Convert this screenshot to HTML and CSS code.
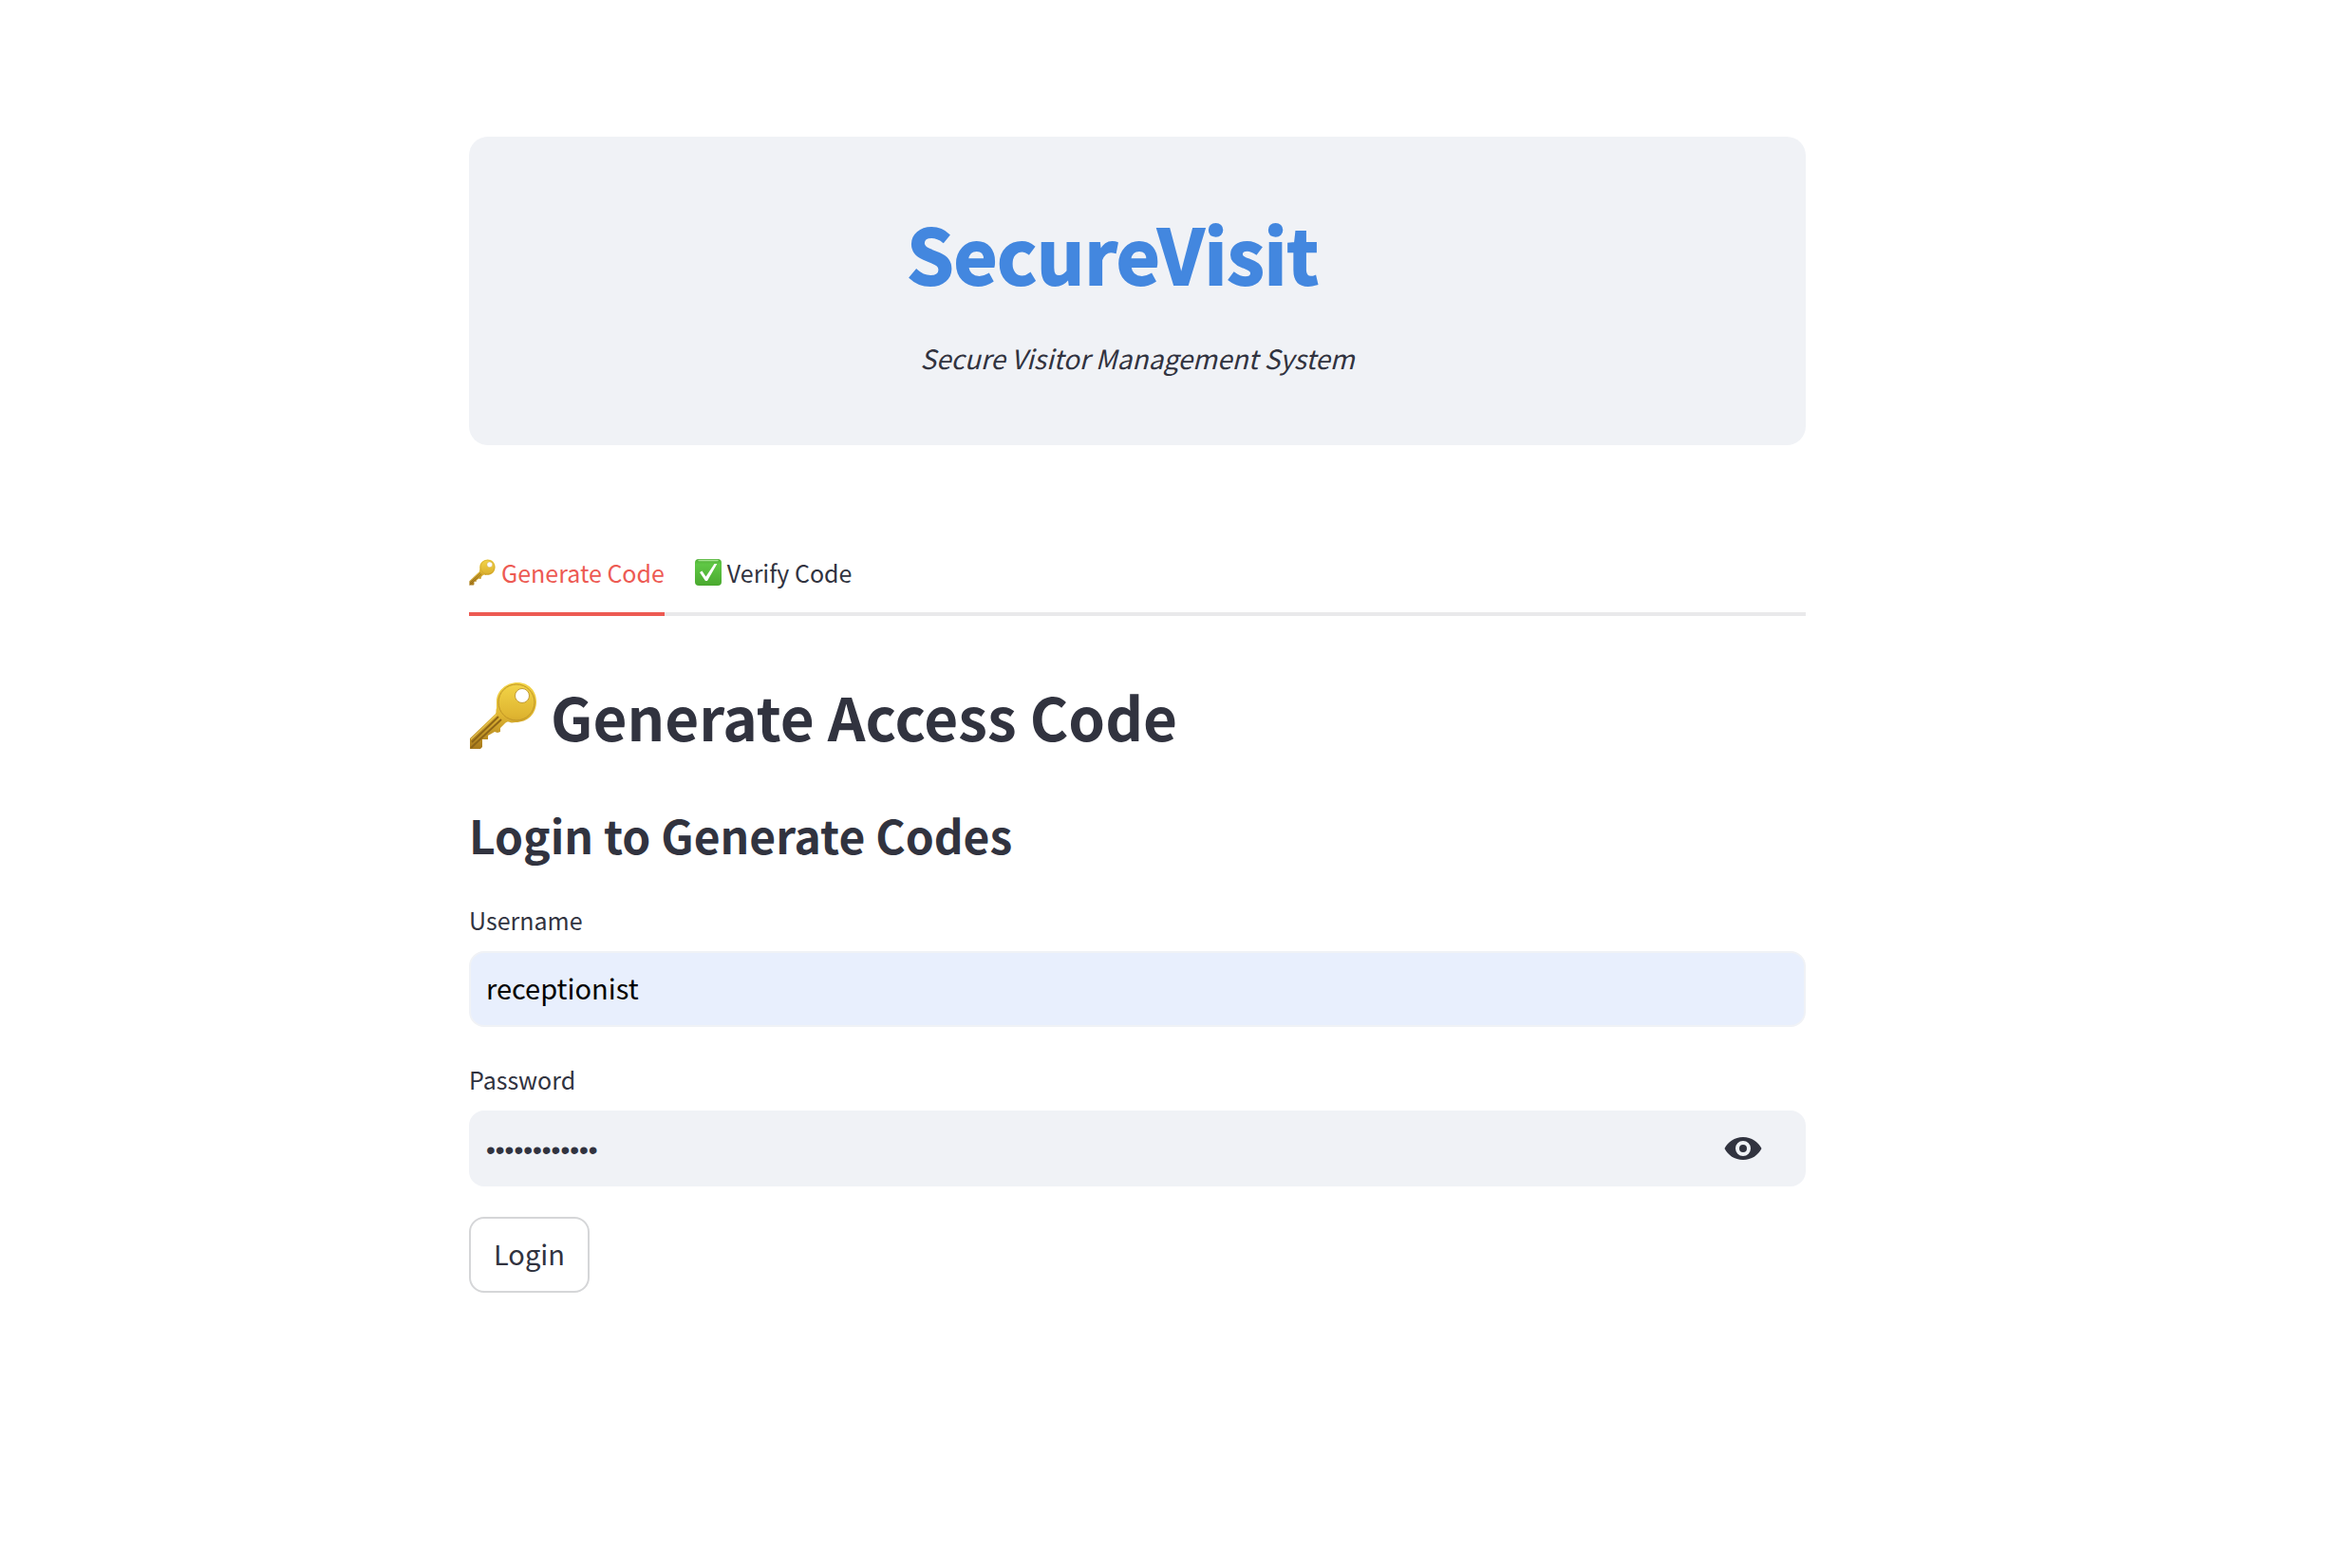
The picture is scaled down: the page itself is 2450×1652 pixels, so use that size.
FILE: index.html
```html
<!DOCTYPE html>
<html lang="en">
<head>
<meta charset="utf-8">
<meta name="viewport" content="width=device-width, initial-scale=1">
<title>SecureVisit</title>
<link rel="stylesheet" href="styles.css">
</head>
<body>
<svg class="defs" aria-hidden="true">
  <defs>
    <linearGradient id="gold" x1="0" y1="0" x2="0" y2="1">
      <stop offset="0" stop-color="#f3d548"/>
      <stop offset="0.5" stop-color="#dfb531"/>
      <stop offset="1" stop-color="#a87a1c"/>
    </linearGradient>
    <linearGradient id="green" x1="0" y1="0" x2="0" y2="1">
      <stop offset="0" stop-color="#4fae35"/>
      <stop offset="0.2" stop-color="#5fc745"/>
      <stop offset="1" stop-color="#4aa92f"/>
    </linearGradient>
    <symbol id="key" viewBox="0 0 72 72">
      <path fill="url(#gold)" d="M51 1C63 1 71 10 71 21C71 34 62 43 49 43C47 43 45 44 43 43C41 42 39 43 38 44L33 49V53L30 54L27 53L20 57V61H14V69L12 71H1V60L28 34C29 32 28 30 29 28V21C29 10 39 1 51 1Z"/>
      <path fill="none" stroke="#8d6517" stroke-width="2" d="M3 64L31 37M2 70L34 40"/>
      <path fill="none" stroke="#f0cf62" stroke-width="1" d="M2 61L29 35"/>
      <circle cx="50" cy="22" r="19" fill="none" stroke="#c09424" stroke-width="1"/>
      <circle cx="56" cy="15" r="7.5" fill="#fff" stroke="#c29b34" stroke-width="1"/>
    </symbol>
    <symbol id="check" viewBox="0 0 28 28">
      <rect width="28" height="28" rx="4" fill="url(#green)"/>
      <path d="M4 1.5H24" stroke="#a5e491" stroke-width="1.4" stroke-linecap="round"/>
      <path fill="#fff" d="M5 14L7.500 12.500L11.500 18.500L20.500 5H23.300L13 23H11Z"/>
    </symbol>
  </defs>
</svg>
<main class="page">
  <header class="banner">
    <h1 class="brand">SecureVisit</h1>
    <p class="tagline">Secure Visitor Management System</p>
  </header>

  <div class="tabs" role="tablist">
    <button class="tab tab-active" type="button" role="tab" aria-selected="true"><svg class="emoji" aria-hidden="true"><use href="#key"/></svg>Generate Code</button>
    <button class="tab" type="button" role="tab" aria-selected="false"><svg class="emoji" aria-hidden="true"><use href="#check"/></svg>Verify Code</button>
  </div>

  <section>
    <h2 class="title"><svg class="emoji-large" aria-hidden="true"><use href="#key"/></svg>Generate Access Code</h2>
    <h3 class="subtitle">Login to Generate Codes</h3>
    <form class="form">
      <div class="fields">
        <div class="field">
          <label for="username">Username</label>
          <div class="control control-filled">
            <input id="username" type="text" value="receptionist" autocomplete="username">
          </div>
        </div>
        <div class="field">
          <label for="password">Password</label>
          <div class="control">
            <input id="password" class="secret" type="password" value="securevisit1" autocomplete="current-password">
            <button class="reveal" type="button" aria-label="Show password">
              <svg class="eye" viewBox="0 0 40 24" aria-hidden="true"><path fill="currentColor" fill-rule="evenodd" d="M20 0C29 0 36 5 39.500 12C36 19 29 24 20 24C11 24 4 19 0.500 12C4 5 11 0 20 0ZM20 4A8 8 0 1 0 20 20A8 8 0 1 0 20 4ZM20 8A4 4 0 1 1 20 16A4 4 0 1 1 20 8Z"/></svg>
            </button>
          </div>
        </div>
      </div>
      <button class="login" type="button">Login</button>
    </form>
  </section>
</main>
</body>
</html>
```
FILE: styles.css
```css
* {
  box-sizing: border-box;
}

body {
  margin: 0;
  padding: 144px 54px 144px 0;
  background: #fff;
  color: #31333f;
  font-family: "Noto Sans CJK JP", "Noto Sans", sans-serif;
  font-size: 29px;
  line-height: 48px;
}

h1, h2, h3, p {
  margin: 0;
}

button, input {
  margin: 0;
  padding: 0;
  border: 0;
  background: none;
  color: inherit;
  font: inherit;
}

.defs {
  position: absolute;
  width: 0;
  height: 0;
}

.page {
  max-width: 1472px;
  margin: 0 auto;
  padding: 0 32px;
}

.banner {
  display: flex;
  flex-direction: column;
  gap: 34px;
  padding: 69px 40px 68px;
  border-radius: 20px;
  background: #f0f2f6;
  text-align: center;
}

.brand {
  padding-right: 52px;
  color: #4387df;
  font-size: 79px;
  font-weight: 700;
  line-height: 106px;
  -webkit-text-stroke: 2px #4387df;
}

.tagline {
  font-size: 28px;
  font-style: italic;
}

.tabs {
  display: flex;
  gap: 32px;
  margin-top: 94px;
  box-shadow: inset 0 -4px #e9e9eb;
}

.tab {
  display: flex;
  align-items: center;
  gap: 6px;
  height: 86px;
  padding-bottom: 6px;
  font-size: 25px;
}

.tab-active {
  box-shadow: inset 0 -4px #ed5a53;
  color: #ed5a53;
}

.emoji {
  width: 28px;
  height: 28px;
}

.title {
  display: flex;
  align-items: center;
  gap: 14px;
  margin-top: 65px;
  font-size: 62px;
  font-weight: 700;
  line-height: 80px;
}

.emoji-large {
  width: 72px;
  height: 72px;
}

.subtitle {
  margin-top: 55px;
  font-size: 48px;
  font-weight: 700;
  line-height: 60px;
}

.form {
  display: flex;
  flex-direction: column;
  align-items: flex-start;
  gap: 32px;
  margin-top: 39px;
}

.fields {
  display: flex;
  flex-direction: column;
  gap: 34px;
  width: 100%;
}

.field {
  display: flex;
  flex-direction: column;
  gap: 12px;
}

.field label {
  font-size: 25px;
  line-height: 42px;
}

.control {
  display: flex;
  height: 80px;
  border: 2px solid #f0f2f6;
  border-radius: 16px;
  background: #f0f2f6;
  overflow: hidden;
}

.control-filled {
  background: #e8effd;
  color: #000;
}

.control input {
  flex: 1;
  min-width: 0;
  padding: 0 16px 4px;
  outline: 0;
}

.control .secret {
  padding: 4px 16px 0;
  font-family: "Liberation Sans", sans-serif;
  font-size: 28px;
}

.reveal {
  display: flex;
  align-items: center;
  padding: 0 44px 0 24px;
}

.eye {
  width: 40px;
  height: 24px;
}

.login {
  height: 80px;
  padding: 0 24px 4px;
  border: 2px solid #d5d6d8;
  border-radius: 16px;
}
```
